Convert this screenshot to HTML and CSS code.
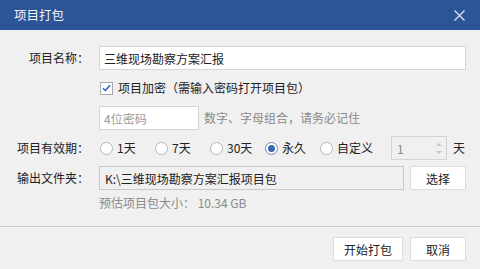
FILE: index.html
```html
<!DOCTYPE html>
<html lang="zh-CN">
  <head>
    <meta charset="UTF-8" />
    <meta name="viewport" content="width=device-width, initial-scale=1.0" />
    <title>项目打包</title>
    <link rel="stylesheet" href="styles.css">
  </head>
  <body>
    <div class="dialog">
      <div class="titlebar">
        <span class="title">项目打包</span>
        <svg class="close" width="11" height="11" viewBox="0 0 11 11">
          <path d="M0.5 0.5 L10.5 10.5 M10.5 0.5 L0.5 10.5" stroke="#dde3ee" stroke-width="1.3" fill="none" />
        </svg>
      </div>

      <div class="body">
        <div class="row">
          <label class="label">项目名称：</label>
          <input class="field wide" type="text" value="三维现场勘察方案汇报" />
        </div>

        <div class="row">
          <span class="label"></span>
          <span class="check">
            <svg width="9" height="8" viewBox="0 0 9 8">
              <path d="M1 4.2 L3.4 6.5 L8 1.2" stroke="#2d5fb4" stroke-width="1.5" fill="none" />
            </svg>
          </span>
          <span class="text">项目加密（需输入密码打开项目包）</span>
        </div>

        <div class="row">
          <span class="label"></span>
          <input class="field pwd" type="text" placeholder="4位密码" />
          <span class="hint">数字、字母组合，请务必记住</span>
        </div>

        <div class="row">
          <label class="label">项目有效期：</label>
          <div class="radios">
            <span class="radio"><i class="dot"></i>1天</span>
            <span class="radio"><i class="dot"></i>7天</span>
            <span class="radio"><i class="dot"></i>30天</span>
            <span class="radio on"><i class="dot"></i>永久</span>
            <span class="radio"><i class="dot"></i>自定义</span>
          </div>
          <div class="spin">
            <span>1</span>
            <span class="arrows"><b class="up"></b><b class="down"></b></span>
          </div>
          <span class="text unit">天</span>
        </div>

        <div class="row">
          <label class="label">输出文件夹：</label>
          <div class="field path">K:\三维现场勘察方案汇报项目包</div>
          <button class="btn pick">选择</button>
        </div>

        <div class="row small">
          <span class="label"></span>
          <span class="hint size">预估项目包大小： 10.34 GB</span>
        </div>
      </div>

      <div class="footer">
        <button class="btn start">开始打包</button>
        <button class="btn">取消</button>
      </div>
    </div>
  </body>
</html>
```

FILE: styles.css
```css
* {
  margin: 0;
  padding: 0;
  box-sizing: border-box;
}
body {
  width: 480px;
  height: 269px;
  background-color: #f0f0f0;
  font-family: "Noto Sans CJK SC", "Noto Sans", sans-serif;
  font-size: 12px;
  color: #222;
  overflow: hidden;
}
.titlebar {
  height: 30px;
  background-color: #2b5597;
  display: flex;
  align-items: center;
  justify-content: space-between;
  padding: 0 15px 0 14px;
}
.title {
  color: #f2f4f8;
  font-size: 12.5px;
  line-height: 16px;
}
.body {
  padding: 16px 14px 0 10px;
  display: flex;
  flex-direction: column;
  gap: 6px;
  height: 196px;
}
.row {
  height: 24px;
  display: flex;
  align-items: center;
}
.row.small {
  height: 14px;
}
.label {
  width: 79px;
  margin-right: 10px;
  text-align: right;
  flex-shrink: 0;
  line-height: 16px;
}
.text {
  line-height: 16px;
}
.field {
  height: 24px;
  border: 1px solid #d6d6d6;
  background-color: #fff;
  font-family: inherit;
  font-size: 12px;
  color: #222;
  padding: 0 4px;
  outline: none;
}
.wide {
  flex: 1;
}
.pwd {
  width: 100px;
}
.pwd::placeholder {
  color: #9a9a9a;
}
.hint {
  color: #8a8a8a;
  margin-left: 5px;
  line-height: 16px;
}
.hint.size {
  margin-left: 0;
}
.check {
  width: 13px;
  height: 13px;
  margin: 0 5px 0 1px;
  border: 1px solid #a9a9a9;
  background-color: #fff;
  display: flex;
  align-items: center;
  justify-content: center;
}
.radios {
  display: flex;
  margin-left: 1px;
}
.radio {
  width: 55px;
  display: flex;
  align-items: center;
  gap: 4px;
  line-height: 16px;
}
.dot {
  width: 13px;
  height: 13px;
  border-radius: 50%;
  border: 1px solid #b5b5b5;
  background-color: #fff;
  display: flex;
  align-items: center;
  justify-content: center;
}
.radio.on .dot {
  border-color: #6f86b8;
}
.radio.on .dot::after {
  content: "";
  width: 7px;
  height: 7px;
  border-radius: 50%;
  background-color: #3b66ae;
}
.spin {
  width: 56px;
  height: 24px;
  margin-left: 16px;
  border: 1px solid #d4d4d4;
  display: flex;
  align-items: center;
  justify-content: space-between;
  padding: 0 4px 0 5px;
  color: #8a8a8a;
}
.arrows {
  display: flex;
  flex-direction: column;
  gap: 5px;
}
.arrows b {
  width: 0;
  height: 0;
  border-left: 3px solid transparent;
  border-right: 3px solid transparent;
}
.up {
  border-bottom: 3px solid #c8c8c8;
}
.down {
  border-top: 3px solid #c8c8c8;
}
.unit {
  margin-left: 6px;
}
.path {
  width: 305px;
  background-color: #f0f0f0;
  border-color: #c9c9c9;
  display: flex;
  align-items: center;
  padding-left: 5px;
}
.btn {
  width: 56px;
  height: 24px;
  border: 1px solid #dcdcdc;
  background-color: #fff;
  font-family: inherit;
  font-size: 12px;
  color: #222;
}
.pick {
  margin-left: 6px;
}
.footer {
  border-top: 1px solid #c8c8c8;
  display: flex;
  justify-content: flex-end;
  gap: 7px;
  padding: 10px 14px 0 0;
}
.start {
  width: 70px;
}
```
